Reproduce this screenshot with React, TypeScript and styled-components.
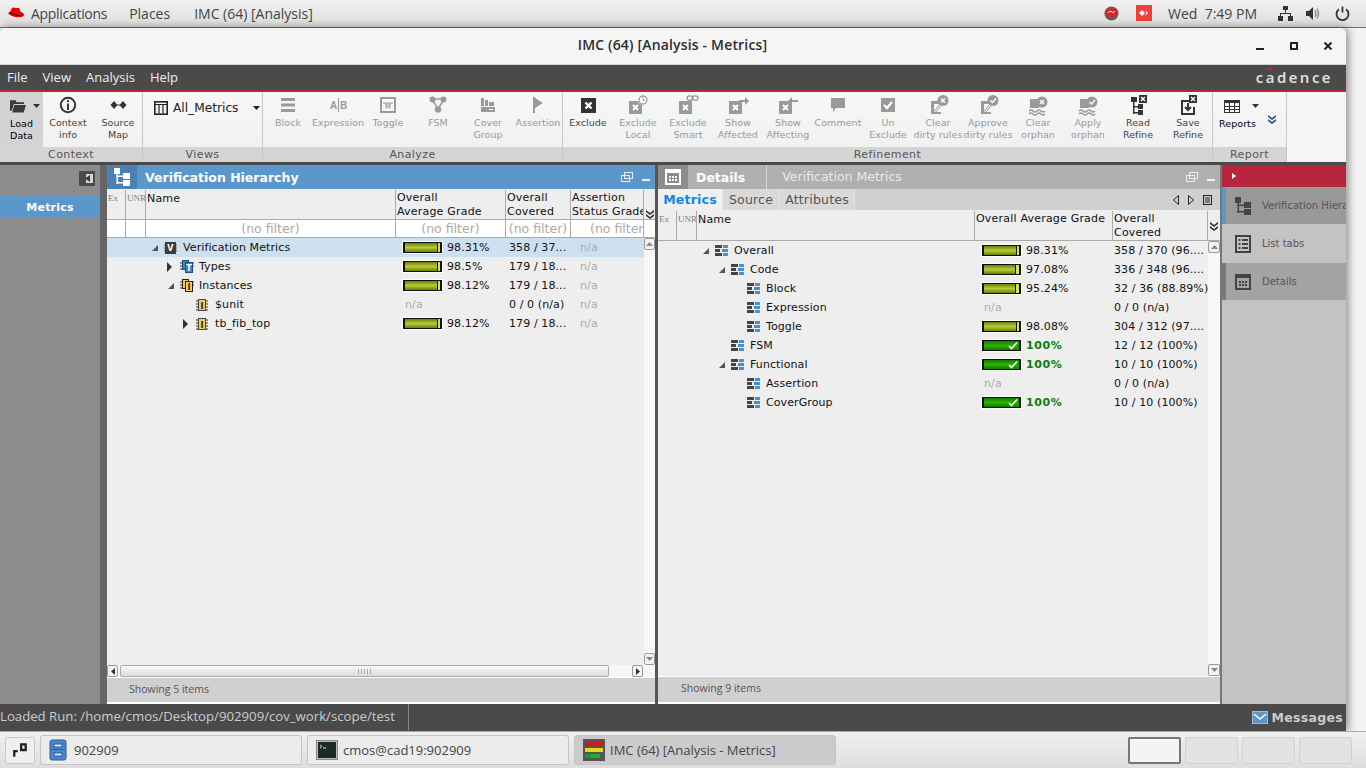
import React from 'react';
import styled, { createGlobalStyle } from 'styled-components';

const GlobalStyle = createGlobalStyle`
  html, body { margin: 0; padding: 0; width: 1366px; height: 768px; overflow: hidden; background: #f3f3f3; }
  #root { width: 1366px; height: 768px; }
  * { box-sizing: border-box; }
  svg { display: block; flex: none; }
`;

const APP_FONT = '"DejaVu Sans", Verdana, sans-serif';
const SHELL_FONT = '"Open Sans", "Noto Sans", sans-serif';

const Desktop = styled.div`
  width: 1366px;
  height: 768px;
  display: flex;
  flex-direction: column;
  overflow: hidden;
`;

/* gnome top bar */
const TopBar = styled.div`
  height: 28px;
  flex: none;
  display: flex;
  align-items: center;
  padding: 0 16px 1px 7px;
  background: linear-gradient(#f1f1f1, #dedede);
  border-bottom: 1px solid #6e6e6e;
  font: 14px ${SHELL_FONT};
  color: #444;
`;
const ShellItem = styled.span<{ $gap?: number; $tight?: boolean }>`
  margin-left: ${(p) => p.$gap ?? 0}px;
  letter-spacing: ${(p) => (p.$tight ? '-0.3px' : '0')};
  white-space: nowrap;
`;
const Spring = styled.div`
  flex: 1;
`;
const TrayGap = styled.div<{ $w: number }>`
  width: ${(p) => p.$w}px;
  flex: none;
`;

const Window = styled.div`
  width: 1346px;
  height: 703px;
  flex: none;
  display: flex;
  flex-direction: column;
  border-radius: 6px 6px 0 0;
  background: #f5f5f5;
  box-shadow: 2px 0 10px rgba(0, 0, 0, 0.45);
  overflow: hidden;
  font-family: ${APP_FONT};
`;
const TitleBar = styled.div`
  height: 37px;
  flex: none;
  display: grid;
  grid-template-columns: 1fr auto 1fr;
  align-items: center;
  background: #f5f5f5;
  border-bottom: 1px solid #d4d4d4;
`;
const WindowTitle = styled.div`
  font: 600 14px ${SHELL_FONT};
  letter-spacing: 0.17px;
  color: #2e2e2e;
  margin: 0 0 3px -1px;
`;
const WindowControls = styled.div`
  display: flex;
  justify-content: flex-end;
  align-items: center;
  gap: 26px;
  padding-right: 14px;
  color: #222;
`;

const MenuBar = styled.div`
  height: 25px;
  flex: none;
  display: flex;
  align-items: center;
  padding: 0 13px 2px 7px;
  gap: 15px;
  background: #4a4a4a;
  color: #eee;
  font: 13px ${SHELL_FONT};
`;
const Brand = styled.span`
  margin-left: auto;
  font: 600 15px ${SHELL_FONT};
  letter-spacing: 2.5px;
  color: #e4e4e4;
  position: relative;
  &::before {
    content: '';
    position: absolute;
    left: 11px;
    top: 1px;
    width: 6px;
    height: 2px;
    background: #b8263e;
  }
`;

const Ribbon = styled.div`
  height: 75px;
  flex: none;
  display: flex;
  border-top: 2px solid #b8263e;
  border-bottom: 3px solid #4a4a4a;
  background: #f5f5f5;
`;
const RibbonGroup = styled.div<{ $w: number }>`
  width: ${(p) => p.$w}px;
  flex: none;
  display: flex;
  flex-direction: column;
  border-right: 1px solid #c8c8c8;
`;
const GroupBody = styled.div`
  height: 55px;
  flex: none;
  display: flex;
  background: linear-gradient(#f7f7f7, #f1f1f1);
`;
const GroupLabel = styled.div`
  flex: 1;
  background: #d5d5d5;
  color: #555;
  font-size: 11px;
  letter-spacing: 0.4px;
  text-align: center;
  line-height: 15px;
`;
const ToolButton = styled.div<{ $w?: number; $on?: boolean; $off?: boolean }>`
  width: ${(p) => p.$w ?? 50}px;
  flex: none;
  display: flex;
  flex-direction: column;
  align-items: center;
  padding-top: ${(p) => (p.$on ? 2 : 1)}px;
  background: ${(p) => (p.$on ? '#d3d3d3' : 'transparent')};
  color: ${(p) => (p.$off ? '#9a9a9a' : '#333')};
`;
const IconSlot = styled.div`
  height: 24px;
  display: flex;
  align-items: center;
  justify-content: center;
`;
const LoadSlot = styled(IconSlot)`
  gap: 7px;
  margin-left: 7px;
`;
const ToolLabel = styled.div<{ $off?: boolean; $strong?: boolean }>`
  font-size: 9.5px;
  line-height: 12px;
  text-align: center;
  white-space: nowrap;
  letter-spacing: 0.05px;
  color: ${(p) => (p.$strong ? '#000' : p.$off ? '#999' : '#444')};
`;
const ViewPicker = styled.div`
  flex: 1;
  display: flex;
  align-items: center;
  height: 32px;
  padding: 0 2px 0 11px;
  font-size: 12.2px;
  color: #222;
`;
const ViewName = styled.span`
  margin-left: 5px;
  flex: 1;
`;
const ReportsBox = styled.div`
  display: flex;
  flex: 1;
`;
const ReportsMain = styled.div`
  width: 46px;
  display: flex;
  flex-direction: column;
  padding: 2px 0 0 3px;
  color: #333;
`;
const ReportsIcons = styled.div`
  display: flex;
  align-items: center;
  height: 24px;
  padding-left: 8px;
  gap: 12px;
`;
const OverflowSlot = styled.div`
  display: flex;
  padding: 23px 0 0 9px;
  color: #2a4a8a;
`;

/* work area */
const Work = styled.div`
  flex: 1;
  display: flex;
  min-height: 0;
`;
const LeftDock = styled.div`
  width: 100px;
  flex: none;
  background: #8c8c8c;
`;
const DockTop = styled.div`
  height: 30px;
  display: flex;
  justify-content: flex-end;
  align-items: flex-start;
  padding: 6px 5px 0 0;
`;
const DockTab = styled.div`
  height: 23px;
  background: #5b97cb;
  color: #fff;
  font-weight: 700;
  font-size: 11px;
  letter-spacing: 0.2px;
  line-height: 26px;
  text-align: center;
`;
const Gutter = styled.div<{ $w: number; $c: string }>`
  width: ${(p) => p.$w}px;
  flex: none;
  background: ${(p) => p.$c};
`;

const Panel = styled.div<{ $w: number }>`
  width: ${(p) => p.$w}px;
  flex: none;
  display: flex;
  flex-direction: column;
  background: #eee;
  min-height: 0;
`;
const PanelHead = styled.div<{ $c: string }>`
  height: 24px;
  flex: none;
  display: flex;
  align-items: center;
  background: ${(p) => p.$c};
  color: #fff;
`;
const PanelIcon = styled.div<{ $c: string }>`
  width: 30px;
  height: 24px;
  display: flex;
  align-items: center;
  justify-content: center;
  background: ${(p) => p.$c};
  margin-right: 8px;
`;
const PanelTitle = styled.span`
  font-weight: 700;
  font-size: 12.5px;
`;
const PanelSub = styled.span`
  margin-left: 21px;
  padding-left: 15px;
  border-left: 1px solid #d8d8d8;
  line-height: 24px;
  font-size: 12.5px;
  color: #e9e9e9;
`;
const PanelTools = styled.div`
  margin-left: auto;
  display: flex;
  align-items: center;
  gap: 9px;
  padding-right: 5px;
`;
const TabStrip = styled.div`
  height: 21px;
  flex: none;
  display: flex;
  background: #d0d0d0;
  align-items: stretch;
`;
const Tab = styled.div<{ $active?: boolean; $w: number }>`
  width: ${(p) => p.$w}px;
  text-align: center;
  font-size: 12.5px;
  line-height: 21px;
  letter-spacing: 0.2px;
  font-weight: ${(p) => (p.$active ? 700 : 400)};
  color: ${(p) => (p.$active ? '#0a8ae6' : '#555')};
  background: ${(p) => (p.$active ? '#f0f0f0' : '#d9d9d9')};
  border-right: 1px solid #e6e6e6;
`;
const TabNav = styled.div`
  margin-left: auto;
  display: flex;
  align-items: center;
  gap: 7px;
  padding-right: 8px;
  color: #222;
`;

const ColumnRow = styled.div<{ $cols: string }>`
  display: grid;
  grid-template-columns: ${(p) => p.$cols};
`;
const HeadWrap = styled.div`
  flex: none;
  height: 30px;
  margin-top: 1px;
  display: flex;
  background: #eee;
  border-bottom: 1px solid #aaa;
`;
const HeadCell = styled.div<{ $single?: boolean }>`
  height: 29px;
  padding: ${(p) => (p.$single ? 2 : 1)}px 0 0 1px;
  border-right: 1px solid #aaa;
  font-size: 11px;
  letter-spacing: 0.2px;
  line-height: 14px;
  color: #111;
  white-space: nowrap;
  overflow: hidden;
`;
const TinyHead = styled.div`
  height: 29px;
  padding: 1px 0 0 1px;
  border-right: 1px solid #aaa;
  font: 9px/14px "Liberation Serif", serif;
  color: #808080;
  white-space: nowrap;
  overflow: hidden;
`;
const HeadMore = styled.div<{ $drop: number }>`
  flex: 1;
  display: flex;
  align-items: center;
  justify-content: center;
  padding-top: ${(p) => p.$drop}px;
  color: #333;
`;
const FilterRow = styled.div`
  flex: none;
  height: 18px;
  display: flex;
  background: #fff;
  border-bottom: 1px solid #aaa;
`;
const FilterCell = styled.div<{ $indent?: number }>`
  height: 17px;
  border-right: 1px solid #aaa;
  font-size: 12.5px;
  line-height: 17px;
  text-align: ${(p) => (p.$indent ? 'left' : 'center')};
  padding-left: ${(p) => p.$indent ?? 0}px;
  color: #aaa;
  white-space: nowrap;
  overflow: hidden;
`;
const Body = styled.div`
  flex: 1;
  display: flex;
  min-height: 0;
`;
const Rows = styled.div`
  flex: 1;
  min-width: 0;
`;
const TreeRow = styled(ColumnRow)<{ $sel?: boolean }>`
  height: 19px;
  align-items: center;
  background: ${(p) => (p.$sel ? '#cde0f0' : 'transparent')};
  font-size: 11px;
  letter-spacing: 0.1px;
  color: #111;
`;
const NameCell = styled.div<{ $depth: number }>`
  grid-column: 3;
  display: flex;
  align-items: center;
  padding-left: ${(p) => 5 + p.$depth * 16}px;
  white-space: nowrap;
`;
const ArrowSlot = styled.div`
  width: 13px;
  flex: none;
  color: #444;
`;
const NodeIcon = styled.div`
  width: 19px;
  flex: none;
`;
const GradeCell = styled.div`
  display: flex;
  align-items: center;
  gap: 5px;
  padding-left: 7px;
  white-space: nowrap;
`;
const Muted = styled.span<{ $pad?: number }>`
  color: #aaa;
  padding-left: ${(p) => p.$pad ?? 2}px;
`;
const Covered = styled.div<{ $pad: number }>`
  padding-left: ${(p) => p.$pad}px;
  white-space: nowrap;
  overflow: hidden;
`;
const Bar = styled.span<{ $full?: boolean }>`
  width: 39px;
  height: 11px;
  flex: none;
  display: flex;
  border: 2px solid #111;
  border-width: 1px 2px;
  outline: 1px solid #fff;
  background: ${(p) => (p.$full ? '#1f9a00' : '#d8e05a')};
  position: relative;
`;
const BarFill = styled.span<{ $full?: boolean }>`
  height: 100%;
  background: ${(p) =>
    p.$full
      ? 'linear-gradient(#0c7a00, #2eb400 50%, #0c7a00)'
      : 'linear-gradient(#6d8200, #b7c93c 50%, #6d8200)'};
  border-right: ${(p) => (p.$full ? 'none' : '1px solid #111')};
`;
const BarCheck = styled.span`
  position: absolute;
  right: 1px;
  top: 0;
  color: #fff;
`;
const Perfect = styled.span`
  font-weight: 700;
  color: #0a7d0a;
  letter-spacing: 0.6px;
`;
const VScroll = styled.div<{ $w: number }>`
  width: ${(p) => p.$w}px;
  flex: none;
  display: flex;
  flex-direction: column;
  justify-content: space-between;
  background: #f7f7f7;
`;
const ScrollBtn = styled.div`
  height: 12px;
  display: flex;
  align-items: center;
  justify-content: center;
  background: #f2f2f2;
  border: 1px solid #999;
  border-radius: 2px;
  color: #888;
`;
const HScroll = styled.div`
  height: 12px;
  flex: none;
  display: flex;
  align-items: center;
  background: #f7f7f7;
`;
const HEnd = styled.div`
  width: 11px;
  height: 12px;
  flex: none;
  display: flex;
  align-items: center;
  justify-content: center;
  background: #f5f5f5;
  border: 1px solid #999;
  border-radius: 2px;
  color: #333;
`;
const HThumb = styled.div`
  width: 489px;
  height: 12px;
  flex: none;
  margin: 0 23px 0 2px;
  display: flex;
  align-items: center;
  justify-content: center;
  border: 1px solid #aaa;
  border-radius: 2px;
  background: linear-gradient(#fafafa, #dcdcdc);
  &::after {
    content: '';
    width: 13px;
    height: 5px;
    background: repeating-linear-gradient(90deg, #aaa 0 1px, transparent 1px 3px);
  }
`;
const PanelFoot = styled.div<{ $pad: number; $h: number; $lh: number }>`
  height: ${(p) => p.$h}px;
  flex: none;
  background: #d0d0d0;
  border-top: 1px solid #fff;
  border-bottom: 2px solid #fff;
  padding-left: ${(p) => p.$pad}px;
  font: 10.5px/${(p) => p.$lh}px ${SHELL_FONT};
  color: #555;
`;

const RightDock = styled.div`
  flex: 1;
  background: #c3c3c3;
  overflow: hidden;
`;
const DockRed = styled.div`
  height: 22px;
  background: #b8263e;
  display: flex;
  align-items: center;
  padding-left: 10px;
  color: #fff;
`;
const DockItem = styled.div<{ $bg: string; $strip: string; $h: number }>`
  height: ${(p) => p.$h}px;
  display: flex;
  align-items: center;
  background: ${(p) => p.$bg};
  border-left: 4px solid ${(p) => p.$strip};
  padding-left: 9px;
  gap: 11px;
  font-size: 10px;
  color: #555;
  white-space: nowrap;
`;

const StatusBar = styled.div`
  height: 27px;
  flex: none;
  display: flex;
  align-items: center;
  padding-bottom: 1px;
  background: #4a4a4a;
  color: #ccc;
`;
const StatusPath = styled.div`
  width: 409px;
  height: 26px;
  border-right: 1px solid #888;
  font: 13.2px/24px ${SHELL_FONT};
  white-space: nowrap;
`;
const Messages = styled.div`
  margin-left: auto;
  display: flex;
  align-items: center;
  gap: 4px;
  padding-right: 3px;
  font-weight: 700;
  font-size: 12.5px;
  letter-spacing: 0.3px;
`;

const TaskBar = styled.div`
  flex: 1;
  display: flex;
  align-items: center;
  padding: 0 14px 0 5px;
  background: linear-gradient(#f0f0f0, #dedede);
  border-top: 1px solid #aaa;
  font: 13px ${SHELL_FONT};
  color: #444;
`;
const DesktopBtn = styled.div`
  width: 30px;
  height: 27px;
  flex: none;
  display: flex;
  align-items: center;
  justify-content: center;
  margin-right: 5px;
  background: #efefef;
  border: 1px solid #c8c8c8;
  border-radius: 3px;
  color: #222;
`;
const TaskButton = styled.div<{ $active?: boolean }>`
  width: 262px;
  height: 30px;
  flex: none;
  display: flex;
  align-items: center;
  gap: 5px;
  padding-left: 8px;
  margin-right: 5px;
  background: ${(p) => (p.$active ? '#cbcbcb' : '#ececec')};
  border: 1px solid #c4c4c4;
  border-radius: 3px;
  white-space: nowrap;
`;
const Workspace = styled.div<{ $active?: boolean }>`
  width: 53px;
  height: 27px;
  flex: none;
  margin-left: ${(p) => (p.$active ? 'auto' : '4px')};
  background: ${(p) => (p.$active ? '#f5f4f2' : '#e2e2e2')};
  border: ${(p) => (p.$active ? '2px solid #777' : '1px solid #d2d2d2')};
  border-radius: 2px;
`;

/* ---------- icons ---------- */

const Svg: React.FC<{ s?: number; h?: number; vb?: string; children: React.ReactNode }> = ({ s = 20, h, vb, children }) => (
  <svg width={s} height={h ?? s} viewBox={vb ?? `0 0 ${s} ${h ?? s}`} fill="currentColor">
    {children}
  </svg>
);

const Caret = () => (
  <Svg s={7} h={4}>
    <path d="M0 0h7L3.5 4z" />
  </Svg>
);

const XBox = ({ badge }: { badge?: React.ReactNode }) => (
  <Svg s={24} h={22}>
    <rect x="3" y="7" width="13" height="13" />
    <path d="M7 11l5 5M12 11l-5 5" stroke="#fff" strokeWidth="2" />
    {badge}
  </Svg>
);

const DirtyRules = ({ mark }: { mark: 'x' | 'check' }) => (
  <Svg s={24} h={22}>
    <path d="M5 7h10v3H8v8h7v2H5z" />
    <path d="M6 20l8-10M9 19l6-7" stroke="currentColor" strokeWidth="1" />
    <circle cx="17" cy="6.5" r="5.5" />
    {mark === 'x' ? (
      <path d="M15 4.5l4 4M19 4.5l-4 4" stroke="#fff" strokeWidth="1.4" />
    ) : (
      <path d="M14.5 6.5l2 2 3.5-4" stroke="#fff" strokeWidth="1.4" fill="none" />
    )}
  </Svg>
);

const Orphan = ({ mark }: { mark: 'x' | 'check' }) => (
  <Svg s={24} h={22}>
    <rect x="4" y="5" width="9" height="9" />
    <path d="M3 17q2 -2 4 0t4 0 4 0 4 0" stroke="currentColor" strokeWidth="1.6" fill="none" />
    <path d="M3 20q2 -2 4 0t4 0 4 0 4 0" stroke="currentColor" strokeWidth="1.4" fill="none" />
    <circle cx="16" cy="8" r="5.5" />
    {mark === 'x' ? (
      <path d="M14 6l4 4M18 6l-4 4" stroke="#fff" strokeWidth="1.4" />
    ) : (
      <path d="M13.5 8l2 2 3.5-4" stroke="#fff" strokeWidth="1.4" fill="none" />
    )}
  </Svg>
);

const toolIcons: Record<string, React.ReactNode> = {
  info: (
    <Svg s={18}>
      <circle cx="9" cy="9" r="7.2" fill="none" stroke="currentColor" strokeWidth="2" />
      <rect x="8" y="4" width="2" height="2" />
      <rect x="8" y="7.5" width="2" height="6.5" />
    </Svg>
  ),
  source: (
    <Svg s={17} h={10}>
      <path d="M4 1l3.5 4L4 9 .5 5zM13 1l3.5 4-3.5 4-3.5-4z" />
      <rect x="6" y="4.5" width="5" height="1" />
    </Svg>
  ),
  block: (
    <Svg s={16}>
      <rect x="1" y="1" width="14" height="3" />
      <rect x="1" y="6.5" width="14" height="3" />
      <rect x="1" y="12" width="14" height="3" />
    </Svg>
  ),
  expression: (
    <Svg s={17} h={14}>
      <text x="0" y="11" fontSize="10" fontWeight="700" fontFamily="Liberation Sans, sans-serif">A</text>
      <rect x="8" y="0" width="1" height="14" />
      <text x="10" y="11" fontSize="10" fontWeight="700" fontFamily="Liberation Sans, sans-serif">B</text>
    </Svg>
  ),
  toggle: (
    <Svg s={16}>
      <rect x="1" y="1" width="14" height="14" fill="none" stroke="currentColor" strokeWidth="2" />
      <path d="M3 6h3v5h1V6h2v5h1V6h3" fill="none" stroke="currentColor" strokeWidth="1" />
    </Svg>
  ),
  fsm: (
    <Svg s={18}>
      <path d="M3 3l6 10M15 3L9 13M3 3h12" stroke="currentColor" strokeWidth="1.5" />
      <circle cx="3.5" cy="3.5" r="3" />
      <circle cx="14.5" cy="3.5" r="3" />
      <circle cx="9" cy="13.5" r="3.2" />
    </Svg>
  ),
  cover: (
    <Svg s={16}>
      <rect x="1" y="1" width="3" height="8" />
      <rect x="5" y="3" width="3" height="6" />
      <rect x="9" y="5" width="5" height="4" />
      <rect x="1" y="10" width="14" height="5" />
      <rect x="9" y="12" width="4" height="1" fill="#fff" />
    </Svg>
  ),
  flag: (
    <Svg s={12} h={16}>
      <path d="M1 0h2v1l8 5-8 5v5H1z" />
    </Svg>
  ),
  exclude: (
    <Svg s={24} h={22}>
      <rect x="5" y="4" width="15" height="15" />
      <path d="M9.5 8.5l6 6M15.5 8.5l-6 6" stroke="#fff" strokeWidth="2.4" />
    </Svg>
  ),
  local: (
    <XBox
      badge={
        <>
          <circle cx="17" cy="6" r="5" fill="#fff" />
          <circle cx="17" cy="6" r="4" fill="none" stroke="currentColor" strokeWidth="1.3" />
          <path d="M17 3.5v3h2" fill="none" stroke="currentColor" />
        </>
      }
    />
  ),
  smart: (
    <XBox
      badge={
        <g fill="none" stroke="currentColor" strokeWidth="1.3">
          <ellipse cx="14" cy="4" rx="3" ry="2.2" />
          <ellipse cx="19" cy="4" rx="3" ry="2.2" />
        </g>
      }
    />
  ),
  affected: <XBox badge={<path d="M13 6h6V3l4 4-4 4V8h-6z" />} />,
  affecting: <XBox badge={<path d="M22 6h-6V3l-4 4 4 4V8h6z" />} />,
  comment: (
    <Svg s={16}>
      <path d="M1 1h14v10H6l-3 4v-4H1z" />
    </Svg>
  ),
  unexclude: (
    <Svg s={16}>
      <rect x="1" y="1" width="14" height="14" />
      <path d="M4 8l3 3 5-6" fill="none" stroke="#fff" strokeWidth="2.2" />
    </Svg>
  ),
  clearDirty: <DirtyRules mark="x" />,
  approveDirty: <DirtyRules mark="check" />,
  clearOrphan: <Orphan mark="x" />,
  applyOrphan: <Orphan mark="check" />,
  read: (
    <Svg s={24} h={22}>
      <rect x="5" y="3" width="6" height="5" />
      <rect x="7" y="8" width="1.5" height="12" />
      <rect x="7" y="12" width="6" height="1.5" />
      <rect x="7" y="18" width="6" height="1.5" />
      <rect x="12" y="10" width="5" height="5" />
      <rect x="12" y="16" width="5" height="5" />
      <rect x="13" y="1" width="8" height="8" />
      <path d="M15 3l4 4M19 3l-4 4" stroke="#fff" strokeWidth="1.3" />
    </Svg>
  ),
  save: (
    <Svg s={24} h={22}>
      <path d="M5 6h8v2H7v11h10v-6h2v8H5z" />
      <path d="M12 9v7M9 13l3 3 3-3" fill="none" stroke="currentColor" strokeWidth="2" />
      <rect x="13" y="1" width="8" height="8" />
      <path d="M15 3l4 4M19 3l-4 4" stroke="#fff" strokeWidth="1.3" />
    </Svg>
  ),
};

const ColumnsIcon = () => (
  <Svg s={14}>
    <rect x="0.8" y="0.8" width="12.4" height="12.4" fill="none" stroke="currentColor" strokeWidth="1.6" />
    <path d="M1 3.5h12M5 3.5v9M9 3.5v9" stroke="currentColor" strokeWidth="1.2" />
  </Svg>
);

const GridIcon = () => (
  <Svg s={16} h={13}>
    <rect x="0.5" y="0.5" width="15" height="12" fill="none" stroke="currentColor" />
    <rect x="0" y="0" width="16" height="3" />
    <path d="M5.5 3v9M10.5 3v9M1 6.5h14M1 9.5h14" stroke="currentColor" />
  </Svg>
);

const HierarchyIcon = ({ c = '#fff' }: { c?: string }) => (
  <svg width="16" height="18" viewBox="0 0 16 18" fill={c}>
    <rect x="0" y="0" width="6" height="6" />
    <rect x="2.5" y="6" width="1.5" height="10" />
    <rect x="2.5" y="7.5" width="7" height="1.5" />
    <rect x="2.5" y="14" width="7" height="1.5" />
    <rect x="9" y="5" width="7" height="6" />
    <rect x="9" y="12" width="7" height="6" />
  </svg>
);

const CalcIcon = ({ c = '#fff', s = 16 }: { c?: string; s?: number }) => (
  <svg width={s} height={s} viewBox="0 0 16 16">
    <rect x="1" y="1" width="14" height="14" fill="none" stroke={c} strokeWidth="2" />
    <rect x="1" y="1" width="14" height="3" fill={c} />
    {[4, 7, 10].map((x) =>
      [7, 10].map((y) => <rect key={`${x}-${y}`} x={x} y={y} width="2" height="2" fill={c} />),
    )}
  </svg>
);

const ListIcon = () => (
  <svg width="16" height="18" viewBox="0 0 16 18" fill="#444">
    <rect x="1" y="1" width="14" height="16" fill="none" stroke="#444" strokeWidth="2" />
    {[4, 8, 12].map((y) => (
      <g key={y}>
        <rect x="3.5" y={y} width="2" height="2" />
        <rect x="7" y={y} width="6" height="2" />
      </g>
    ))}
  </svg>
);

const RestoreIcon = () => (
  <svg width="12" height="10" viewBox="0 0 12 10" fill="none" stroke="#eee">
    <rect x="3.5" y="0.5" width="8" height="6" />
    <rect x="0.5" y="3.5" width="8" height="6" />
  </svg>
);
const MinIcon = () => (
  <svg width="8" height="10" viewBox="0 0 8 10" fill="#eee">
    <rect x="0" y="7" width="8" height="2" />
  </svg>
);
const Chevrons = () => (
  <Svg s={8} h={9}>
    <path d="M0 0l4 3 4-3v2L4 5 0 2zM0 4l4 3 4-3v2L4 9 0 6z" />
  </Svg>
);

const MetricIcon = () => (
  <svg width="13" height="11" viewBox="0 0 13 11">
    <path d="M0 0h7v3H0zM0 4h5v3H0zM0 8h7v3H0z" fill="#444" />
    <path d="M8 0h5v3H8zM7 4h6v3H7zM8 8h5v3H8z" fill="#4a90d0" />
  </svg>
);

const ChipIcon = ({ fill, letter, stroke, stacked }: { fill: string; letter: string; stroke: string; stacked?: boolean }) => (
  <svg width="14" height="13" viewBox="0 0 14 13">
    <path d="M0 3h3M0 6h3M0 9h3M11 3h3M11 6h3" stroke="#333" strokeWidth="1" />
    {stacked && <rect x="2.5" y="0.5" width="6" height="9" fill={fill} stroke={stroke} />}
    <rect x="5.5" y="2.5" width="7" height="10" fill={fill} stroke={stroke} />
    <text x="9" y="10.5" fontSize="8" fontWeight="700" textAnchor="middle" fill={stroke === '#222' ? '#222' : '#fff'} fontFamily="DejaVu Sans, sans-serif">{letter}</text>
  </svg>
);

const ModuleIcon = () => (
  <svg width="12" height="12" viewBox="0 0 12 12">
    <path d="M0 2h2M0 5h2M0 8h2M0 11h2M10 2h2M10 5h2M10 8h2M10 11h2" stroke="#333" />
    <rect x="2.5" y="0.5" width="7" height="11" fill="#f6cb58" stroke="#444" />
    <text x="6" y="9.5" fontSize="8" fontWeight="700" textAnchor="middle" fill="#222" fontFamily="DejaVu Sans, sans-serif">I</text>
  </svg>
);

const VmIcon = () => (
  <svg width="13" height="12" viewBox="0 0 13 12">
    <rect x="1" y="0" width="11" height="12" fill="#3c3c3c" />
    <path d="M0 3h1M0 6h1M0 9h1M12 3h1M12 6h1M12 9h1" stroke="#555" />
    <text x="6.5" y="9" fontSize="8" fontWeight="700" textAnchor="middle" fill="#fff" fontFamily="DejaVu Sans, sans-serif">V</text>
  </svg>
);

const nodeIcons: Record<string, React.ReactNode> = {
  metric: <MetricIcon />,
  vm: <VmIcon />,
  types: <ChipIcon fill="#3f84c4" letter="T" stroke="#1f4f80" stacked />,
  inst: <ChipIcon fill="#f6cb58" letter="I" stroke="#222" stacked />,
  module: <ModuleIcon />,
};

const TreeArrow = ({ kind }: { kind?: 'open' | 'closed' }) => {
  if (kind === 'open')
    return (
      <Svg s={8} h={8}>
        <path d="M7 1v6H1z" fill="#555" />
      </Svg>
    );
  if (kind === 'closed')
    return (
      <Svg s={6} h={10}>
        <path d="M0 0l5 5-5 5z" fill="#333" />
      </Svg>
    );
  return null;
};

const GradeBar = ({ value, full }: { value: number; full?: boolean }) => (
  <Bar $full={full}>
    <BarFill $full={full} style={{ width: `${Math.round(value * 0.9 + 5)}%` }} />
    {full && (
      <BarCheck>
        <svg width="10" height="9" viewBox="0 0 10 9">
          <path d="M1 5l2.5 2.5L9 1.5" fill="none" stroke="#fff" strokeWidth="1.6" />
        </svg>
      </BarCheck>
    )}
  </Bar>
);

/* ---------- data ---------- */

type Tool = { icon: string; lines: string[]; off?: boolean };

const analyzeTools: Tool[] = [
  { icon: 'block', lines: ['Block'], off: true },
  { icon: 'expression', lines: ['Expression'], off: true },
  { icon: 'toggle', lines: ['Toggle'], off: true },
  { icon: 'fsm', lines: ['FSM'], off: true },
  { icon: 'cover', lines: ['Cover', 'Group'], off: true },
  { icon: 'flag', lines: ['Assertion'], off: true },
];

const refineTools: Tool[] = [
  { icon: 'exclude', lines: ['Exclude'] },
  { icon: 'local', lines: ['Exclude', 'Local'], off: true },
  { icon: 'smart', lines: ['Exclude', 'Smart'], off: true },
  { icon: 'affected', lines: ['Show', 'Affected'], off: true },
  { icon: 'affecting', lines: ['Show', 'Affecting'], off: true },
  { icon: 'comment', lines: ['Comment'], off: true },
  { icon: 'unexclude', lines: ['Un', 'Exclude'], off: true },
  { icon: 'clearDirty', lines: ['Clear', 'dirty rules'], off: true },
  { icon: 'approveDirty', lines: ['Approve', 'dirty rules'], off: true },
  { icon: 'clearOrphan', lines: ['Clear', 'orphan'], off: true },
  { icon: 'applyOrphan', lines: ['Apply', 'orphan'], off: true },
  { icon: 'read', lines: ['Read', 'Refine'] },
  { icon: 'save', lines: ['Save', 'Refine'] },
];

type TreeItem = {
  depth: number;
  name: string;
  icon: string;
  arrow?: 'open' | 'closed';
  grade?: number;
  gradeText?: string;
  full?: boolean;
  covered: string;
  sel?: boolean;
};

const hierarchyRows: TreeItem[] = [
  { depth: 0, name: 'Verification Metrics', icon: 'vm', arrow: 'open', grade: 98.31, gradeText: '98.31%', covered: '358 / 37...', sel: true },
  { depth: 1, name: 'Types', icon: 'types', arrow: 'closed', grade: 98.5, gradeText: '98.5%', covered: '179 / 18...' },
  { depth: 1, name: 'Instances', icon: 'inst', arrow: 'open', grade: 98.12, gradeText: '98.12%', covered: '179 / 18...' },
  { depth: 2, name: '$unit', icon: 'module', covered: '0 / 0 (n/a)' },
  { depth: 2, name: 'tb_fib_top', icon: 'module', arrow: 'closed', grade: 98.12, gradeText: '98.12%', covered: '179 / 18...' },
];

const detailRows: TreeItem[] = [
  { depth: 0, name: 'Overall', icon: 'metric', arrow: 'open', grade: 98.31, gradeText: '98.31%', covered: '358 / 370 (96....' },
  { depth: 1, name: 'Code', icon: 'metric', arrow: 'open', grade: 97.08, gradeText: '97.08%', covered: '336 / 348 (96....' },
  { depth: 2, name: 'Block', icon: 'metric', grade: 95.24, gradeText: '95.24%', covered: '32 / 36 (88.89%)' },
  { depth: 2, name: 'Expression', icon: 'metric', covered: '0 / 0 (n/a)' },
  { depth: 2, name: 'Toggle', icon: 'metric', grade: 98.08, gradeText: '98.08%', covered: '304 / 312 (97....' },
  { depth: 1, name: 'FSM', icon: 'metric', grade: 100, full: true, gradeText: '100%', covered: '12 / 12 (100%)' },
  { depth: 1, name: 'Functional', icon: 'metric', arrow: 'open', grade: 100, full: true, gradeText: '100%', covered: '10 / 10 (100%)' },
  { depth: 2, name: 'Assertion', icon: 'metric', covered: '0 / 0 (n/a)' },
  { depth: 2, name: 'CoverGroup', icon: 'metric', grade: 100, full: true, gradeText: '100%', covered: '10 / 10 (100%)' },
];

const LEFT_COLS = '19px 20px 250px 110px 65px 73px';
const RIGHT_COLS = '19px 20px 278px 138px 95px';

/* ---------- pieces ---------- */

const ToolBtn = ({ tool }: { tool: Tool }) => (
  <ToolButton $off={tool.off}>
    <IconSlot>{toolIcons[tool.icon]}</IconSlot>
    {tool.lines.map((l) => (
      <ToolLabel key={l} $off={tool.off}>
        {l}
      </ToolLabel>
    ))}
  </ToolButton>
);

const TableRow = ({ row, cols, assertion }: { row: TreeItem; cols: string; assertion?: boolean }) => (
  <TreeRow $cols={cols} $sel={row.sel}>
    <NameCell $depth={row.depth}>
      <ArrowSlot>
        <TreeArrow kind={row.arrow} />
      </ArrowSlot>
      <NodeIcon>{nodeIcons[row.icon]}</NodeIcon>
      {row.name}
    </NameCell>
    <GradeCell>
      {row.grade === undefined ? (
        <Muted>n/a</Muted>
      ) : (
        <>
          <GradeBar value={row.grade} full={row.full} />
          {row.full ? <Perfect>{row.gradeText}</Perfect> : row.gradeText}
        </>
      )}
    </GradeCell>
    <Covered $pad={assertion ? 3 : 1}>{row.covered}</Covered>
    {assertion && <Muted $pad={9}>n/a</Muted>}
  </TreeRow>
);

const UpArrow = () => (
  <Svg s={7} h={4}>
    <path d="M3.5 0L7 4H0z" />
  </Svg>
);
const DownArrow = () => (
  <Svg s={7} h={4}>
    <path d="M0 0h7L3.5 4z" />
  </Svg>
);

const App: React.FC = () => (
  <Desktop>
    <GlobalStyle />
    <TopBar>
      <svg width="18" height="13" viewBox="0 0 18 13">
        <path d="M5 1c1-1 2.5-.5 4 0 1 .3 2-.3 2.5-.2 1 .2 1.7 3 2 4 1.5.5 3.5 1.5 3.5 3 0 1.800-2.500 2.500-5.500 2.500C8 10.300 3 8.500 1.700 7c-.8-.9-.2-1.700.5-1.600C3 5.500 4.500 2.500 5 1z" fill="#e00" />
        <path d="M2.500 5.300c2 1.500 7 3.300 11 3.300" stroke="#111" strokeWidth="1" fill="none" />
      </svg>
      <ShellItem $gap={6} $tight>Applications</ShellItem>
      <ShellItem $gap={22}>Places</ShellItem>
      <ShellItem $gap={24}>IMC (64) [Analysis]</ShellItem>
      <Spring />
      <svg width="15" height="15" viewBox="0 0 15 15">
        <circle cx="7.5" cy="7.5" r="7" fill="#6a5a5a" />
        <ellipse cx="7.5" cy="6.5" rx="6" ry="4.5" fill="#e0202a" />
        <path d="M4 7c1-2 3-2 4-1s2 0 3-1" stroke="#fff" fill="none" />
      </svg>
      <TrayGap $w={17} />
      <svg width="16" height="16" viewBox="0 0 16 16">
        <rect width="16" height="16" fill="#f0403a" />
        <path d="M3 8l3-3 3 3-3 3zM9 5l3 3-3 3 1.5-3z" fill="#fff" />
      </svg>
      <ShellItem $gap={16}>Wed&nbsp;&nbsp;7:49 PM</ShellItem>
      <TrayGap $w={21} />
      <svg width="15" height="15" viewBox="0 0 15 15" fill="#333">
        <rect x="5" y="0" width="5" height="4" />
        <rect x="0" y="10" width="5" height="5" />
        <rect x="10" y="10" width="5" height="5" />
        <path d="M7 4h1v3h5v3h-1V8H3v2H2V7h5z" />
      </svg>
      <TrayGap $w={13} />
      <svg width="15" height="13" viewBox="0 0 15 13" fill="#333">
        <path d="M0 4h3l4-4v13L3 9H0z" />
        <path d="M9 3q2 3.5 0 7M11 1.5q3 5 0 10" stroke="#888" fill="none" strokeWidth="1.3" />
      </svg>
      <TrayGap $w={14} />
      <svg width="15" height="15" viewBox="0 0 15 15" fill="none" stroke="#333" strokeWidth="1.8">
        <path d="M4 3.2a6 6 0 1 0 7 0M7.5 0.5v6" />
      </svg>
    </TopBar>

    <Window>
      <TitleBar>
        <span />
        <WindowTitle>IMC (64) [Analysis - Metrics]</WindowTitle>
        <WindowControls>
          <svg width="8" height="8" viewBox="0 0 8 8" fill="currentColor">
            <rect y="6" width="8" height="2" />
          </svg>
          <svg width="8" height="8" viewBox="0 0 8 8" fill="none" stroke="currentColor" strokeWidth="2">
            <rect x="1" y="1" width="6" height="6" />
          </svg>
          <svg width="8" height="8" viewBox="0 0 8 8" fill="none" stroke="currentColor" strokeWidth="2">
            <path d="M0.5 0.5l7 7M7.5 0.5l-7 7" />
          </svg>
        </WindowControls>
      </TitleBar>

      <MenuBar>
        <span>File</span>
        <span>View</span>
        <span>Analysis</span>
        <span>Help</span>
        <Brand>cadence</Brand>
      </MenuBar>

      <Ribbon>
        <RibbonGroup $w={143}>
          <GroupBody>
            <ToolButton $w={43} $on>
              <LoadSlot>
                <svg width="16" height="14" viewBox="0 0 17 14" fill="#3a3a3a">
                  <path d="M0 1h6l1 2h8v2H4L2 12H0zM4.5 6H17l-2.5 8H2.5z" />
                </svg>
                <Caret />
              </LoadSlot>
              <ToolLabel $strong>Load</ToolLabel>
              <ToolLabel $strong>Data</ToolLabel>
            </ToolButton>
            <ToolBtn tool={{ icon: 'info', lines: ['Context', 'info'] }} />
            <ToolBtn tool={{ icon: 'source', lines: ['Source', 'Map'] }} />
          </GroupBody>
          <GroupLabel>Context</GroupLabel>
        </RibbonGroup>

        <RibbonGroup $w={120}>
          <GroupBody>
            <ViewPicker>
              <ColumnsIcon />
              <ViewName>All_Metrics</ViewName>
              <Caret />
            </ViewPicker>
          </GroupBody>
          <GroupLabel>Views</GroupLabel>
        </RibbonGroup>

        <RibbonGroup $w={300}>
          <GroupBody>
            {analyzeTools.map((t) => (
              <ToolBtn key={t.icon} tool={t} />
            ))}
          </GroupBody>
          <GroupLabel>Analyze</GroupLabel>
        </RibbonGroup>

        <RibbonGroup $w={650}>
          <GroupBody>
            {refineTools.map((t) => (
              <ToolBtn key={t.icon} tool={t} />
            ))}
          </GroupBody>
          <GroupLabel>Refinement</GroupLabel>
        </RibbonGroup>

        <RibbonGroup $w={74}>
          <GroupBody>
            <ReportsBox>
              <ReportsMain>
                <ReportsIcons>
                  <GridIcon />
                  <Caret />
                </ReportsIcons>
                <ToolLabel $strong>Reports</ToolLabel>
              </ReportsMain>
              <OverflowSlot>
                <Chevrons />
              </OverflowSlot>
            </ReportsBox>
          </GroupBody>
          <GroupLabel>Report</GroupLabel>
        </RibbonGroup>
      </Ribbon>

      <Work>
        <LeftDock>
          <DockTop>
            <svg width="16" height="15" viewBox="0 0 16 15">
              <rect width="16" height="15" rx="1" fill="#4a4a4a" />
              <rect x="7" y="3" width="7" height="9" fill="#d4d4d4" />
              <path d="M11 4L6 7.5 11 11z" fill="#3a3a3a" />
            </svg>
          </DockTop>
          <DockTab>Metrics</DockTab>
        </LeftDock>
        <Gutter $w={7} $c="#666" />

        <Panel $w={548}>
          <PanelHead $c="#5c97cb">
            <PanelIcon $c="#4a80b4">
              <HierarchyIcon />
            </PanelIcon>
            <PanelTitle>Verification Hierarchy</PanelTitle>
            <PanelTools>
              <RestoreIcon />
              <MinIcon />
            </PanelTools>
          </PanelHead>
          <HeadWrap>
            <ColumnRow $cols={LEFT_COLS}>
              <TinyHead>Ex</TinyHead>
              <TinyHead>UNR</TinyHead>
              <HeadCell $single>Name</HeadCell>
              <HeadCell>
                Overall
                <br />
                Average Grade
              </HeadCell>
              <HeadCell>
                Overall
                <br />
                Covered
              </HeadCell>
              <HeadCell>
                Assertion
                <br />
                Status Grade
              </HeadCell>
            </ColumnRow>
            <HeadMore $drop={20}>
              <Chevrons />
            </HeadMore>
          </HeadWrap>
          <FilterRow>
            <ColumnRow $cols={LEFT_COLS}>
              <FilterCell />
              <FilterCell />
              <FilterCell>(no filter)</FilterCell>
              <FilterCell>(no filter)</FilterCell>
              <FilterCell>(no filter)</FilterCell>
              <FilterCell $indent={19}>(no filter)</FilterCell>
            </ColumnRow>
          </FilterRow>
          <Body>
            <Rows>
              {hierarchyRows.map((r) => (
                <TableRow key={r.name} row={r} cols={LEFT_COLS} assertion />
              ))}
            </Rows>
            <VScroll $w={11}>
              <ScrollBtn>
                <UpArrow />
              </ScrollBtn>
              <ScrollBtn>
                <DownArrow />
              </ScrollBtn>
            </VScroll>
          </Body>
          <HScroll>
            <HEnd>
              <Svg s={4} h={7}>
                <path d="M4 0v7L0 3.5z" />
              </Svg>
            </HEnd>
            <HThumb />
            <HEnd>
              <Svg s={4} h={7}>
                <path d="M0 0v7l4-3.5z" />
              </Svg>
            </HEnd>
          </HScroll>
          <PanelFoot $pad={22} $h={27} $lh={23}>Showing 5 items</PanelFoot>
        </Panel>
        <Gutter $w={3} $c="#555" />

        <Panel $w={562}>
          <PanelHead $c="#b0b0b0">
            <PanelIcon $c="#8c8c8c">
              <CalcIcon />
            </PanelIcon>
            <PanelTitle>Details</PanelTitle>
            <PanelSub>Verification Metrics</PanelSub>
            <PanelTools>
              <RestoreIcon />
              <MinIcon />
            </PanelTools>
          </PanelHead>
          <TabStrip>
            <Tab $active $w={65}>Metrics</Tab>
            <Tab $w={57}>Source</Tab>
            <Tab $w={75}>Attributes</Tab>
            <TabNav>
              <Svg s={6} h={10}>
                <path d="M5.5 0.5v9L0.5 5z" fill="none" stroke="currentColor" />
              </Svg>
              <Svg s={10} h={10}>
                <path d="M2.5 0.5v9l5-4.5z" fill="none" stroke="currentColor" />
              </Svg>
              <Svg s={9} h={10}>
                <rect x="0.5" y="0.5" width="8" height="9" fill="none" stroke="currentColor" />
                <path d="M2 3h5M2 5h5M2 7h5" stroke="currentColor" />
              </Svg>
            </TabNav>
          </TabStrip>
          <HeadWrap>
            <ColumnRow $cols={RIGHT_COLS}>
              <TinyHead>Ex</TinyHead>
              <TinyHead>UNR</TinyHead>
              <HeadCell $single>Name</HeadCell>
              <HeadCell>Overall Average Grade</HeadCell>
              <HeadCell>
                Overall
                <br />
                Covered
              </HeadCell>
            </ColumnRow>
            <HeadMore $drop={1}>
              <Chevrons />
            </HeadMore>
          </HeadWrap>
          <Body>
            <Rows>
              {detailRows.map((r) => (
                <TableRow key={r.name} row={r} cols={RIGHT_COLS} />
              ))}
            </Rows>
            <VScroll $w={12}>
              <ScrollBtn>
                <UpArrow />
              </ScrollBtn>
              <ScrollBtn>
                <DownArrow />
              </ScrollBtn>
            </VScroll>
          </Body>
          <PanelFoot $pad={23} $h={28} $lh={22}>Showing 9 items</PanelFoot>
        </Panel>
        <Gutter $w={2} $c="#777" />

        <RightDock>
          <DockRed>
            <Svg s={4} h={6}>
              <path d="M0 0l4 3-4 3z" />
            </Svg>
          </DockRed>
          <DockItem $bg="#999" $strip="#5c97cb" $h={37}>
            <HierarchyIcon c="#444" />
            Verification Hierarchy
          </DockItem>
          <DockItem $bg="#c3c3c3" $strip="#c3c3c3" $h={39}>
            <ListIcon />
            List tabs
          </DockItem>
          <DockItem $bg="#a3a3a3" $strip="#7a7a7a" $h={37}>
            <CalcIcon c="#444" />
            Details
          </DockItem>
        </RightDock>
      </Work>

      <StatusBar>
        <StatusPath>Loaded Run: /home/cmos/Desktop/902909/cov_work/scope/test</StatusPath>
        <Messages>
          <svg width="16" height="13" viewBox="0 0 16 13">
            <rect width="16" height="13" fill="#5c97cb" stroke="#ddd" />
            <path d="M2 3l6 5 6-5" stroke="#fff" strokeWidth="1.5" fill="none" />
          </svg>
          Messages
        </Messages>
      </StatusBar>
    </Window>

    <TaskBar>
      <DesktopBtn>
        <svg width="16" height="16" viewBox="0 0 14 14" fill="currentColor">
          <path d="M7 1h6v7H7zM9 3v3h2V3zM1 7h4v2H3v4H1z" />
        </svg>
      </DesktopBtn>
      <TaskButton>
        <svg width="20" height="22" viewBox="0 0 20 22">
          <rect x="1" y="1" width="16" height="20" rx="2" fill="#4a86d0" stroke="#2a5a9a" />
          <path d="M2 10.5h14" stroke="#2a5a9a" />
          <rect x="5" y="5" width="8" height="3" fill="#dbe6f5" stroke="#2a5a9a" />
          <rect x="5" y="14" width="8" height="3" fill="#dbe6f5" stroke="#2a5a9a" />
        </svg>
        902909
      </TaskButton>
      <TaskButton>
        <svg width="22" height="20" viewBox="0 0 22 20">
          <rect x="0.5" y="0.5" width="21" height="19" fill="#bbb" stroke="#888" />
          <rect x="2" y="2" width="18" height="16" fill="#1d2a2a" />
          <path d="M4 5l2 1.5L4 8M7 8h3" stroke="#ddd" fill="none" />
        </svg>
        cmos@cad19:902909
      </TaskButton>
      <TaskButton $active>
        <svg width="22" height="22" viewBox="0 0 22 22">
          <rect width="22" height="22" fill="#555" />
          <rect x="2" y="3" width="4" height="4" fill="#c41818" />
          <rect x="7" y="3" width="13" height="4" fill="#d81818" />
          <rect x="2" y="9" width="18" height="4" fill="#e8d820" />
          <rect x="2" y="15" width="4" height="4" fill="#1e9a1e" />
          <rect x="7" y="15" width="10" height="4" fill="#22b022" />
        </svg>
        IMC (64) [Analysis - Metrics]
      </TaskButton>
      <Workspace $active />
      <Workspace />
      <Workspace />
      <Workspace />
    </TaskBar>
  </Desktop>
);

export default App;
